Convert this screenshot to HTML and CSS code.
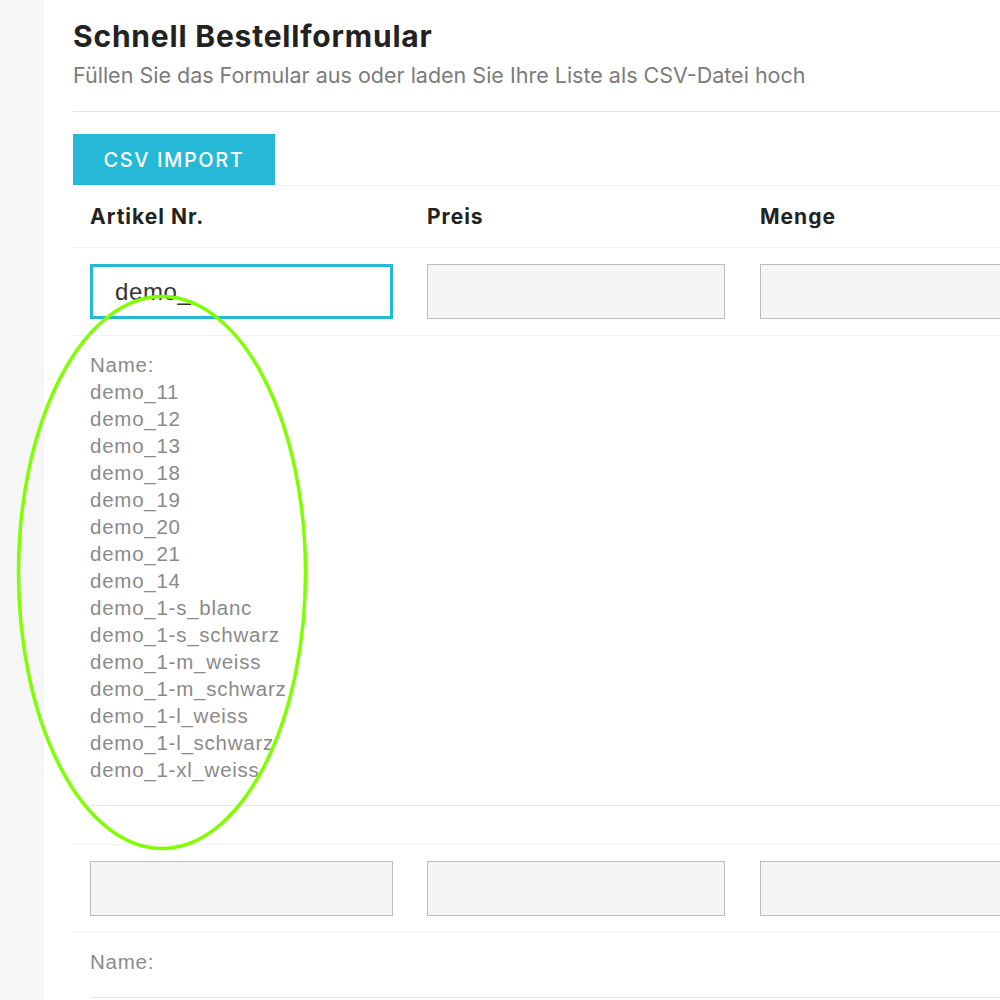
FILE: index.html
```html
<!DOCTYPE html>
<html lang="de">
<head>
<meta charset="utf-8">
<title>Schnell Bestellformular</title>
<link rel="stylesheet" href="styles.css">
</head>
<body>
<div class="page">
  <aside class="sidebar"></aside>
  <main class="main">
    <header class="head">
      <h1 class="title">Schnell Bestellformular</h1>
      <p class="subtitle">Füllen Sie das Formular aus oder laden Sie Ihre Liste als CSV-Datei hoch</p>
    </header>
    <div class="toolbar">
      <button class="csv-btn" type="button">CSV IMPORT</button>
    </div>
    <div class="table">
      <div class="row header-row">
        <div class="cell">Artikel Nr.</div>
        <div class="cell">Preis</div>
        <div class="cell">Menge</div>
      </div>
      <div class="row input-row">
        <div class="cell"><input class="field active" type="text" value="demo_"></div>
        <div class="cell"><input class="field" type="text"></div>
        <div class="cell"><input class="field" type="text"></div>
      </div>
      <div class="suggest">
        <ul class="suggest-list">
          <li>Name:</li>
          <li>demo_11</li>
          <li>demo_12</li>
          <li>demo_13</li>
          <li>demo_18</li>
          <li>demo_19</li>
          <li>demo_20</li>
          <li>demo_21</li>
          <li>demo_14</li>
          <li>demo_1-s_blanc</li>
          <li>demo_1-s_schwarz</li>
          <li>demo_1-m_weiss</li>
          <li>demo_1-m_schwarz</li>
          <li>demo_1-l_weiss</li>
          <li>demo_1-l_schwarz</li>
          <li>demo_1-xl_weiss</li>
        </ul>
      </div>
      <div class="row input-row">
        <div class="cell"><input class="field" type="text"></div>
        <div class="cell"><input class="field" type="text"></div>
        <div class="cell"><input class="field" type="text"></div>
      </div>
      <div class="suggest">
        <ul class="suggest-list">
          <li>Name:</li>
        </ul>
      </div>
    </div>
  </main>
  <svg class="highlight" width="1000" height="1000" viewBox="0 0 1000 1000" aria-hidden="true">
    <ellipse cx="162" cy="572.5" rx="143.5" ry="276" fill="none" stroke="#7fff00" stroke-width="3.5"/>
  </svg>
</div>
</body>
</html>
```
FILE: styles.css
```css
html, body {
  margin: 0;
  padding: 0;
  overflow: hidden;
  background: #fff;
}
body {
  font-family: Inter, "Noto Sans", "Liberation Sans", sans-serif;
  color: #222;
}
.page {
  position: relative;
  display: flex;
  width: 1000px;
  height: 1000px;
  overflow: hidden;
}
.sidebar {
  flex: 0 0 44px;
  background: #f6f6f6;
}
.main {
  flex: 0 0 auto;
  width: 1004px;
  padding: 0 0 0 29px;
}
.head {
  padding-top: 18px;
  padding-bottom: 24px;
  border-bottom: 1px solid #e2e2e2;
}
.title {
  margin: 0;
  font-size: 30px;
  line-height: 36px;
  font-weight: 700;
  color: #222;
  letter-spacing: 0.8px;
}
.subtitle {
  margin: 9px 0 0;
  font-size: 21.5px;
  line-height: 24px;
  color: #7b7b7b;
  font-weight: 400;
}
.toolbar {
  padding-top: 22px;
  display: flex;
}
.csv-btn {
  width: 202px;
  height: 51px;
  border: 0;
  margin: 0;
  background: #25b9d7;
  color: #fff;
  font-family: inherit;
  font-size: 20px;
  font-weight: 500;
  letter-spacing: 1.6px;
  padding: 0;
}
.row {
  display: grid;
  grid-template-columns: 337px 333px 334px;
  border-top: 1px solid #f1f1f1;
}
.cell {
  box-sizing: border-box;
  padding: 0 0 0 17px;
}
.header-row {
  height: 62px;
  align-items: center;
  box-sizing: border-box;
}
.header-row .cell {
  font-size: 21px;
  font-weight: 700;
  letter-spacing: 1px;
  color: #222;
}
.input-row {
  padding: 16px 0 16px;
}
.field {
  display: block;
  box-sizing: border-box;
  width: 298px;
  height: 55px;
  margin: 0;
  background: #f5f5f5;
  border: 1px solid #bcbcbc;
  border-radius: 0;
  font-family: "Liberation Sans", Arial, sans-serif;
  font-size: 24px;
  letter-spacing: 0.6px;
  color: #333;
  padding: 0 0 0 22px;
  outline: none;
}
.cell:first-child .field {
  width: 303px;
}
.field.active {
  background: #fff;
  border: 3px solid #25b9d7;
}
.suggest {
  border-top: 1px solid #f1f1f1;
  padding: 0 17px;
  margin-bottom: 38px;
}
.suggest-list {
  list-style: none;
  margin: 0;
  padding: 15px 0 22px;
  border-bottom: 1px solid #e6e6e6;
  font-family: "Liberation Sans", Arial, sans-serif;
  font-size: 20.5px;
  letter-spacing: 0.75px;
  line-height: 27px;
  color: #8a8a8a;
}
.highlight {
  position: absolute;
  left: 0;
  top: 0;
  pointer-events: none;
}
```
